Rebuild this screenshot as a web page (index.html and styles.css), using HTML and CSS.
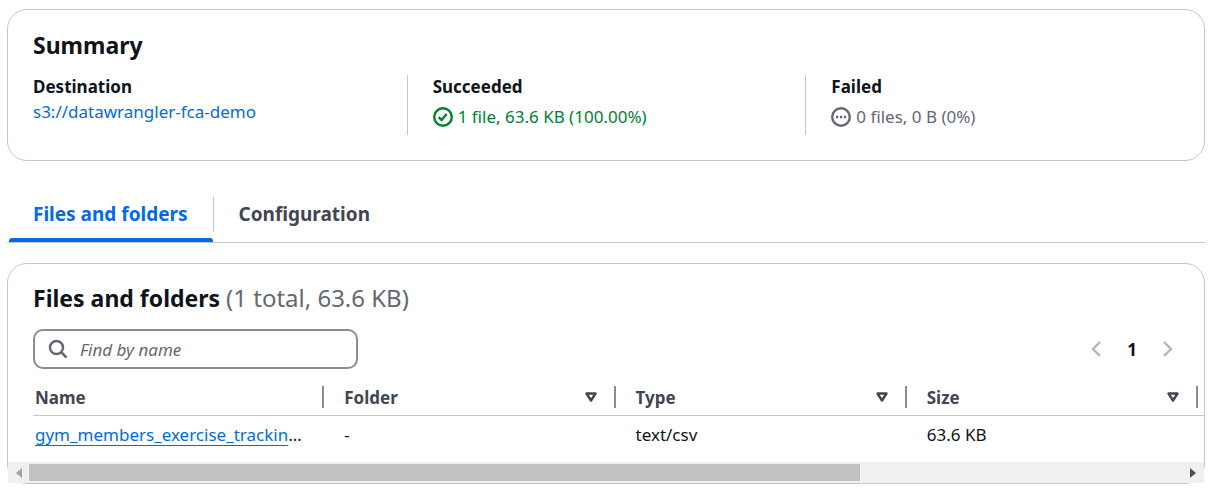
FILE: index.html
```html
<!DOCTYPE html>
<html lang="en">
<head>
    <meta charset="UTF-8">
    <meta name="viewport" content="width=device-width, initial-scale=1.0">
    <title>Upload: status</title>
    <link rel="stylesheet" href="styles.css">
</head>
<body>

<section class="card summary">
    <h2>Summary</h2>
    <div class="summary-grid">
        <div class="summary-item">
            <h3>Destination</h3>
            <a href="#" class="destination">s3://datawrangler-fca-demo</a>
        </div>
        <div class="summary-item">
            <h3>Succeeded</h3>
            <div class="status success">
                <svg class="status-icon" viewBox="0 0 20 20" aria-hidden="true">
                    <circle cx="10" cy="10" r="8.8"/>
                    <path d="M5.6 10.2l3 2.8 5-6"/>
                </svg>
                <span>1 file, 63.6 KB (100.00%)</span>
            </div>
        </div>
        <div class="summary-item">
            <h3>Failed</h3>
            <div class="status inactive">
                <svg class="status-icon" viewBox="0 0 20 20" aria-hidden="true">
                    <circle cx="10" cy="10" r="8.8"/>
                    <path d="M5 10h2.2M8.9 10h2.2M12.8 10h2.2"/>
                </svg>
                <span>0 files, 0 B (0%)</span>
            </div>
        </div>
    </div>
</section>

<div class="tabs" role="tablist">
    <button type="button" class="tab active" role="tab" aria-selected="true">Files and folders</button>
    <button type="button" class="tab" role="tab" aria-selected="false">Configuration</button>
</div>

<section class="card files">
    <h2>Files and folders <span class="count">(1 total, 63.6 KB)</span></h2>

    <div class="tools">
        <label class="search">
            <svg viewBox="0 0 20 20" aria-hidden="true">
                <circle cx="8.5" cy="8.5" r="6.5"/>
                <path d="M13.2 13.2l5.3 5.3"/>
            </svg>
            <input type="search" placeholder="Find by name" aria-label="Find by name">
        </label>
        <div class="pagination">
            <button type="button" class="page-arrow" aria-label="Previous page" disabled>
                <svg viewBox="0 0 10 18" aria-hidden="true"><path d="M9 2L2 9l7 7"/></svg>
            </button>
            <button type="button" class="page-number">1</button>
            <button type="button" class="page-arrow" aria-label="Next page" disabled>
                <svg viewBox="0 0 10 18" aria-hidden="true"><path d="M1 2l7 7-7 7"/></svg>
            </button>
        </div>
    </div>

    <div class="table-wrap">
        <table>
            <thead>
                <tr>
                    <th><div class="head">Name</div></th>
                    <th>
                        <div class="head">Folder
                            <svg class="sort" viewBox="0 0 14 12" aria-hidden="true"><path d="M2.5 2.5h9l-4.5 7z"/></svg>
                        </div>
                    </th>
                    <th>
                        <div class="head">Type
                            <svg class="sort" viewBox="0 0 14 12" aria-hidden="true"><path d="M2.5 2.5h9l-4.5 7z"/></svg>
                        </div>
                    </th>
                    <th>
                        <div class="head">Size
                            <svg class="sort" viewBox="0 0 14 12" aria-hidden="true"><path d="M2.5 2.5h9l-4.5 7z"/></svg>
                        </div>
                    </th>
                    <td class="rest"></td>
                </tr>
            </thead>
            <tbody>
                <tr>
                    <td><a href="#" class="file-link">gym_members_exercise_trackin</a>…</td>
                    <td>-</td>
                    <td>text/csv</td>
                    <td>63.6 KB</td>
                    <td class="rest"></td>
                </tr>
            </tbody>
        </table>
    </div>

    <div class="scrollbar" aria-hidden="true">
        <svg class="scroll-arrow left" viewBox="0 0 6 10"><path d="M6 0v10L0 5z"/></svg>
        <div class="scroll-track"><div class="scroll-thumb"></div></div>
        <svg class="scroll-arrow right" viewBox="0 0 6 10"><path d="M0 0v10l6-5z"/></svg>
    </div>
</section>

</body>
</html>
```
FILE: styles.css
```css
* {
    box-sizing: border-box;
}
body {
    margin: 9px 17px 0 7px;
    font-family: "Noto Sans", "Open Sans", sans-serif;
    font-size: 17px;
    line-height: 25px;
    color: #0f141a;
    background-color: #fff;
}
h2, h3 {
    margin: 0;
}
h2 {
    font-size: 23px;
    line-height: 30px;
}
h3 {
    font-size: 17px;
    line-height: 24px;
}
a {
    color: #006ce0;
    text-decoration: none;
}
button {
    font: inherit;
    border: none;
    background: none;
    padding: 0;
    cursor: pointer;
}
svg {
    flex: none;
    fill: none;
    stroke: currentColor;
}
.card {
    border: 1px solid #c6c6cd;
    border-radius: 20px;
}

/* Summary */
.summary {
    padding: 20px 0 25px;
}
.summary h2 {
    padding: 0 25px;
}
.summary-grid {
    display: grid;
    grid-template-columns: repeat(3, 1fr);
    margin-top: 15px;
}
.summary-item {
    height: 60px;
    padding: 0 25px;
}
.summary-item + .summary-item {
    border-left: 1px solid #c6c6cd;
}
.destination {
    display: block;
}
.status {
    display: flex;
    align-items: center;
    gap: 5px;
    margin-top: 5px;
}
.status-icon {
    width: 20px;
    height: 20px;
    stroke-width: 2.4;
}
.success {
    color: #00802f;
}
.inactive {
    color: #656871;
}

/* Tabs */
.tabs {
    display: flex;
    margin-top: 36px;
    border-bottom: 1px solid #c6c6cd;
}
.tab {
    position: relative;
    height: 45px;
    padding: 0 25px 10px 26px;
    font-size: 19px;
    font-weight: 700;
    line-height: 35px;
    color: #424650;
}
.tab + .tab::before {
    content: "";
    position: absolute;
    top: 0;
    left: 0;
    width: 1px;
    height: 35px;
    background-color: #c6c6cd;
}
.tab.active {
    color: #006ce0;
}
.tab.active::after {
    content: "";
    position: absolute;
    left: 2px;
    right: 0;
    bottom: 0;
    height: 4px;
    border-radius: 3px 3px 0 0;
    background-color: #006ce0;
}

/* Files and folders */
.files {
    margin-top: 20px;
    padding-top: 19px;
}
.files h2 {
    padding: 0 25px;
}
.count {
    font-size: 24px;
    font-weight: 400;
    color: #656871;
}
.tools {
    display: flex;
    justify-content: space-between;
    align-items: center;
    margin-top: 16px;
    padding: 0 31px 0 25px;
}
.search {
    display: flex;
    align-items: center;
    gap: 12px;
    width: 325px;
    height: 40px;
    padding: 0 13px;
    border: 2px solid #8c8c94;
    border-radius: 10px;
    color: #656871;
}
.search svg {
    width: 20px;
    height: 20px;
    stroke-width: 2.5;
}
.search input {
    flex: 1;
    min-width: 0;
    padding: 0;
    border: none;
    outline: none;
    font: inherit;
    background: none;
}
.search input::placeholder {
    color: #656871;
    font-style: italic;
    opacity: 1;
}
.pagination {
    display: flex;
    align-items: center;
    gap: 26px;
}
.page-arrow {
    display: flex;
    color: #b4b4bb;
}
.page-arrow svg {
    width: 10px;
    height: 18px;
    stroke-width: 2.4;
}
.page-number {
    font-weight: 700;
    color: #0f141a;
}
.table-wrap {
    margin-top: 10px;
    padding-left: 25px;
    overflow: hidden;
}
table {
    width: 100%;
    table-layout: fixed;
    border-collapse: separate;
    border-spacing: 0;
}
th {
    padding: 7px 0;
    border-bottom: 1px solid #c6c6cd;
    text-align: left;
    color: #424650;
}
.head {
    display: flex;
    justify-content: space-between;
    align-items: center;
    height: 22px;
    padding: 0 16px 0 20px;
    border-right: 2px solid #8c8c94;
}
th:first-child .head {
    padding-left: 2px;
}
.sort {
    width: 14px;
    height: 12px;
    stroke-width: 2.4;
    stroke-linejoin: round;
}
td {
    height: 46px;
    padding: 6px 16px 15px 20px;
    overflow: hidden;
    text-overflow: ellipsis;
    white-space: nowrap;
}
td:first-child {
    padding-left: 2px;
}
.rest {
    width: 6px;
    padding: 0;
}
thead .rest {
    height: 37px;
    border-bottom: 1px solid #c6c6cd;
}
.file-link {
    text-decoration: underline;
    text-decoration-thickness: 1px;
    text-underline-offset: 4px;
}

/* Horizontal scrollbar */
.scrollbar {
    display: flex;
    align-items: center;
    height: 21px;
    padding: 0 8px;
    background-color: #f0f0f0;
}
.scroll-arrow {
    width: 6px;
    height: 10px;
    stroke: none;
}
.scroll-arrow.left {
    fill: #a3a3a3;
}
.scroll-arrow.right {
    fill: #505050;
}
.scroll-track {
    flex: 1;
    margin: 0 7px;
}
.scroll-thumb {
    width: 72%;
    height: 17px;
    background-color: #c1c1c1;
}
```
